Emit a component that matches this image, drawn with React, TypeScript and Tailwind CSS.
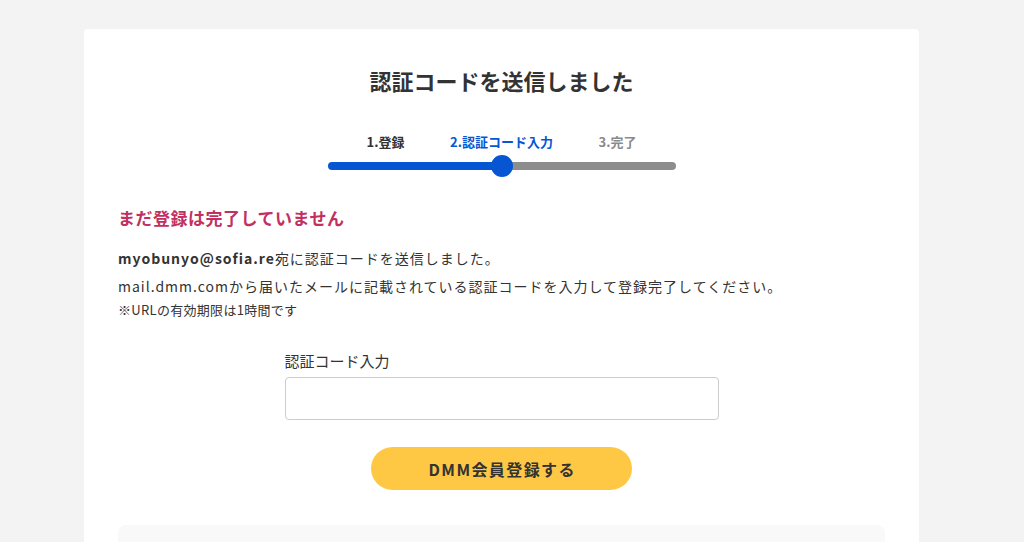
export default function App() {
  return (
    <div
      className="min-h-screen bg-[#f3f3f3] pt-[29px] text-[#333]"
      style={{ fontFamily: '"Noto Sans CJK JP", "Noto Sans", sans-serif' }}
    >
      <div className="ml-[84px] w-[835px] rounded bg-white px-[34px] pt-[35px]">
        <h1 className="text-center text-[22px] font-bold leading-[32px]">認証コードを送信しました</h1>

        {/* stepper */}
        <div className="mx-auto mt-[36px] w-[348px]">
          <div className="grid grid-cols-3 text-center text-[13px] font-bold leading-[20px]">
            <span className="text-[#333]">1.登録</span>
            <span className="text-[#0656d4]">2.認証コード入力</span>
            <span className="text-[#8a8a8a]">3.完了</span>
          </div>
          <div className="relative mt-[3px] flex h-[22px] items-center">
            <div className="h-[8px] w-1/2 rounded-l-full bg-[#0656d4]" />
            <div className="h-[8px] w-1/2 rounded-r-full bg-[#8d8d8d]" />
            <div className="absolute left-1/2 top-0 h-[22px] w-[22px] -translate-x-1/2 rounded-full bg-[#0656d4]" />
          </div>
        </div>

        <h2 className="mt-[28px] text-[17px] font-bold leading-[26px] tracking-[0.5px] text-[#c2305f]">
          まだ登録は完了していません
        </h2>
        <div className="mt-[13px] text-[14px] leading-[28px] tracking-[1px]">
          <p>
            <span className="font-bold">myobunyo@sofia.re</span>宛に認証コードを送信しました。
          </p>
          <p>mail.dmm.comから届いたメールに記載されている認証コードを入力して登録完了してください。</p>
        </div>
        <p className="text-[13px] leading-[20px] tracking-[0.3px]">※URLの有効期限は1時間です</p>

        {/* form */}
        <div className="mx-auto mt-[29px] w-[434px]">
          <label className="block text-[15px] leading-[24px]">認証コード入力</label>
          <input
            type="text"
            className="mt-[4px] block h-[43px] w-full rounded border border-[#cccccc] px-3 text-[15px] outline-none"
          />
        </div>
        <div className="mt-[27px] flex justify-center">
          <button className="h-[43px] w-[261px] rounded-full bg-[#ffc844] pl-[1.4px] text-[16px] font-bold tracking-[1.4px] text-[#333]">
            DMM会員登録する
          </button>
        </div>

        <div className="mt-[35px] h-[100px] rounded-lg bg-[#f9f9f9]" />
      </div>
    </div>
  );
}
